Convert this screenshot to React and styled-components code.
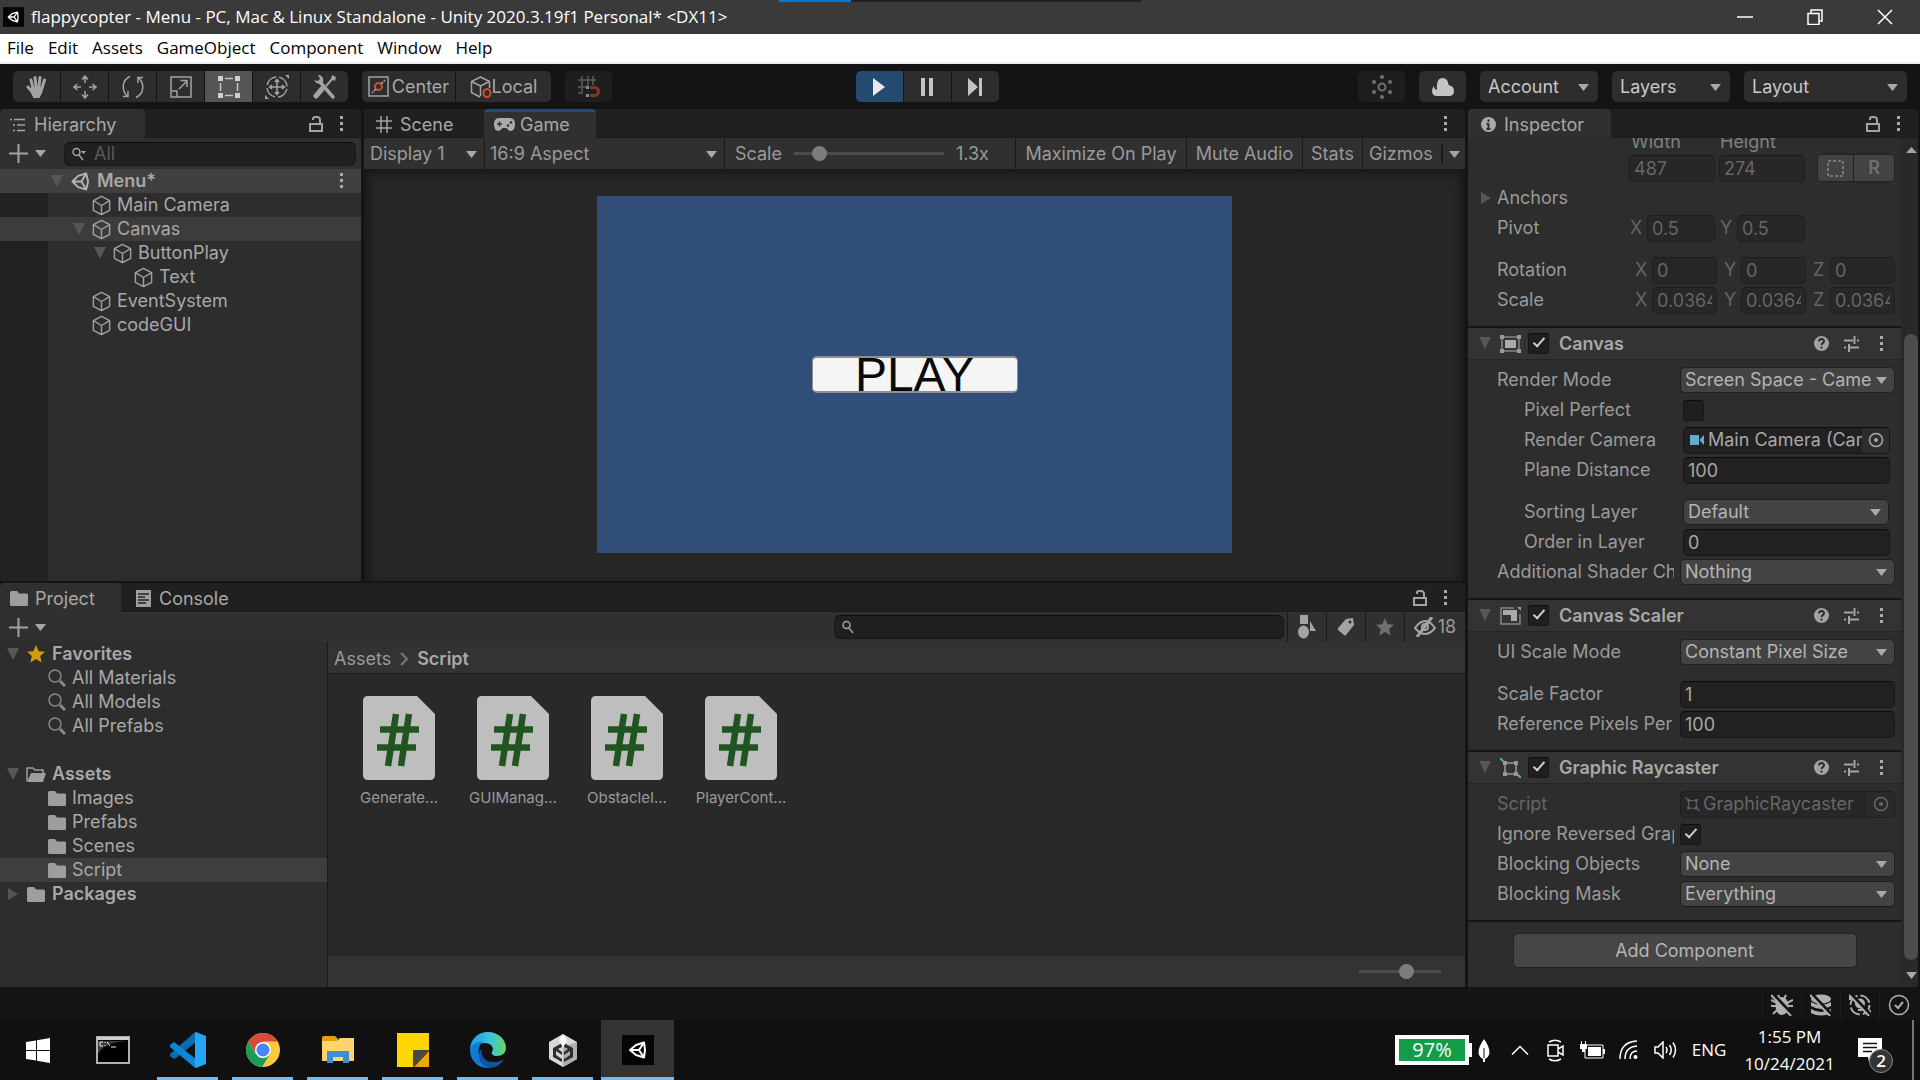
import React, { useId } from "react";
import styled, { createGlobalStyle, css } from "styled-components";

const c = {
  bar: "#141414",
  panel: "#2d2d2d",
  strip: "#303030",
  tabs: "#202020",
  field: "#212121",
  fieldOff: "#272727",
  drop: "#434343",
  text: "#a8a8a8",
  label: "#9a9a9a",
  dim: "#666666",
  line: "#1a1a1a",
  icon: "#a3a3a3",
  fold: "#565656",
  accent: "#244a70",
  orange: "#c8512e",
};

const UI = `Inter, "Open Sans", sans-serif`;
const WIN = `"Open Sans", "Noto Sans", sans-serif`;

const Global = createGlobalStyle`
  *, *::before, *::after { box-sizing: border-box; }
  html, body { margin: 0; background: ${c.bar}; }
  body { font-family: ${UI}; font-size: 18px; line-height: 24px; color: ${c.text}; overflow: hidden; }
  button, input, select { font: inherit; color: inherit; margin: 0; padding: 0; border: 0; background: none; border-radius: 0; outline: 0; }
  a { color: inherit; text-decoration: none; }
  svg { display: block; flex: none; }
  ul { list-style: none; margin: 0; padding: 0; }
`;

/* ---------- shell ---------- */

const Screen = styled.div`
  display: flex;
  flex-direction: column;
  height: 100vh;
`;

const TitleBar = styled.header`
  position: relative;
  display: flex;
  align-items: center;
  height: 34px;
  flex: none;
  padding-left: 3px;
  background: #3a3a3a;
  color: #fff;
  font-family: ${WIN};
`;

const AppTitle = styled.h1`
  flex: 1;
  margin: 0;
  padding-left: 7px;
  font-size: 17px;
  font-weight: 400;
  white-space: nowrap;
`;

const Progress = styled.div`
  position: absolute;
  top: 0;
  left: 779px;
  width: 362px;
  height: 2px;
  background: linear-gradient(90deg, #0078d7 72px, #202020 72px);
`;

const WindowButton = styled.button`
  display: flex;
  align-items: center;
  justify-content: center;
  width: 70px;
  height: 34px;
`;

const MenuBar = styled.nav`
  display: flex;
  align-items: center;
  height: 30px;
  flex: none;
  gap: 14px;
  padding: 0 7px;
  background: #fff;
  border-bottom: 2px solid #eee;
  color: #000;
  font-family: ${WIN};
  font-size: 17px;
`;

const MenuItem = styled.button`
  height: 28px;
`;

const ToolBar = styled.div`
  display: grid;
  grid-template-columns: 1fr auto 1fr;
  align-items: center;
  height: 45px;
  flex: none;
  padding: 0 13px;
  background: ${c.bar};
`;

const ToolSide = styled.div`
  display: flex;
  gap: 14px;
  justify-content: ${(p) => (p.$end ? "flex-end" : "flex-start")};
`;

const Group = styled.div`
  display: flex;
  gap: 1px;
  border-radius: 5px;
  overflow: hidden;
`;

const Transport = styled.div`
  padding-right: 66px;
`;

const ToolButton = styled.button`
  display: flex;
  align-items: center;
  justify-content: center;
  gap: ${(p) => p.$gap || 0}px;
  width: ${(p) => p.$w || 47}px;
  height: 31px;
  background: ${(p) => (p.$on ? p.$on : p.$faint ? "#1e1e1e" : c.panel)};
  color: ${(p) => (p.$faint ? "#6b6b6b" : c.text)};
`;

/* ---------- panels ---------- */

const Workspace = styled.main`
  display: flex;
  flex: 1;
  min-height: 0;
  gap: 3px;
  padding-right: 2px;
`;

const MainColumn = styled.div`
  display: flex;
  flex-direction: column;
  flex: 1;
  min-width: 0;
  gap: 2px;
`;

const TopRow = styled.div`
  display: flex;
  gap: 3px;
  flex: 472 1 0;
  min-height: 0;
`;

const Panel = styled.section`
  display: flex;
  flex-direction: column;
  min-width: 0;
  min-height: 0;
  flex: ${(p) => p.$flex || "1"};
  background: ${c.panel};
  border-radius: 4px 4px 0 0;
  overflow: hidden;
`;

const TabBar = styled.div`
  display: flex;
  align-items: stretch;
  height: 29px;
  flex: none;
  background: ${c.tabs};
  box-shadow: inset 0 -1px ${c.line};
`;

const Tab = styled.button`
  display: flex;
  align-items: center;
  gap: ${(p) => p.$gap || 8}px;
  padding: 2px ${(p) => p.$pad || 10}px 0;
  width: ${(p) => p.$w}px;
  border-radius: 4px 4px 0 0;
  background: ${(p) => (p.$on ? c.strip : "transparent")};
  ${(p) => p.$focus && css`box-shadow: inset 0 3px ${c.accent};`}
`;

const TabTools = styled.div`
  display: flex;
  align-items: center;
  gap: 17px;
  margin-left: auto;
  padding-right: 17px;
`;

const IconButton = styled.button`
  display: flex;
  align-items: center;
  justify-content: center;
`;

const Strip = styled.div`
  display: flex;
  align-items: center;
  height: ${(p) => p.$h || 31}px;
  flex: none;
  padding: 0 ${(p) => p.$r || 0}px 0 ${(p) => p.$l || 0}px;
  background: ${c.strip};
`;

const AddButton = styled(IconButton)`
  flex: none;
  gap: 7px;
`;

const SearchBox = styled.label`
  display: flex;
  align-items: center;
  gap: 8px;
  width: ${(p) => (p.$w ? p.$w + "px" : "auto")};
  flex: ${(p) => (p.$w ? "none" : "1 1 0")};
  min-width: 0;
  margin-left: ${(p) => p.$ml || "auto"};
  height: 24px;
  padding: 0 7px;
  border: 1px solid #181818;
  border-top-color: #0c0c0c;
  border-radius: 6px;
  background: ${c.tabs};
  input { flex: 1; width: 100%; min-width: 0; height: 22px; }
  input::placeholder { color: #5a5a5a; opacity: 1; }
`;

/* ---------- trees ---------- */

const Tree = styled.ul`
  flex: 1;
  background: ${(p) => (p.$gutter ? `linear-gradient(90deg, #222 48px, ${c.panel} 48px)` : c.panel)};
`;

const TreeRow = styled.li`
  display: flex;
  align-items: center;
  gap: ${(p) => p.$gap || 6}px;
  height: 24px;
  padding-left: ${(p) => p.$indent}px;
  font-weight: ${(p) => (p.$bold ? 600 : 400)};
  white-space: nowrap;
  background: ${(p) => (p.$bg ? p.$bg : "transparent")};
`;

const Gap24 = styled.li`
  height: 24px;
`;

const Fold = styled.span`
  display: flex;
  justify-content: center;
  width: 14px;
  flex: none;
`;

const PushRight = styled.span`
  margin-left: auto;
  padding-right: 17px;
`;

/* ---------- game view ---------- */

const Cell = styled.div`
  display: flex;
  align-items: center;
  justify-content: ${(p) => p.$justify || "flex-start"};
  gap: ${(p) => p.$gap || 0}px;
  height: 31px;
  padding: 0 ${(p) => p.$pad || 6}px;
  width: ${(p) => (p.$w ? p.$w + "px" : "auto")};
  flex: ${(p) => (p.$w ? "none" : 1)};
  color: ${c.label};
  white-space: nowrap;
  &:not(:last-child) { border-right: 1px solid ${c.line}; }
`;

const Viewport = styled.div`
  display: flex;
  flex: 1;
  min-height: 0;
  align-items: stretch;
  justify-content: center;
  padding: 27px 0 28px;
  background: #272727;
  box-shadow: inset 0 8px 12px -4px #161616, inset 10px 0 10px -6px #1a1a1a, inset -10px 0 10px -6px #1a1a1a;
`;

const GameCanvas = styled.div`
  display: flex;
  align-items: center;
  justify-content: center;
  aspect-ratio: 16 / 9;
  background: #314e79;
`;

const PlayButton = styled.button`
  width: 206px;
  height: 37px;
  border: solid #8f8f8f;
  border-width: 2px 1px;
  border-radius: 5px;
  background: #f5f5f5;
  color: #0a0a0a;
  font-family: "Liberation Sans", Arial, sans-serif;
  font-size: 48px;
  line-height: 34px;
`;

const Slider = styled.input`
  appearance: none;
  width: ${(p) => p.$w}px;
  height: 16px;
  background: linear-gradient(#4c4c4c, #4c4c4c) center / 100% 3px no-repeat;
  &::-webkit-slider-thumb {
    appearance: none;
    width: 15px;
    height: 15px;
    border-radius: 50%;
    background: #7d7d7d;
  }
`;

/* ---------- project ---------- */

const ProjectBody = styled.div`
  display: flex;
  flex: 1;
  min-height: 0;
`;

const ProjectSide = styled.div`
  display: flex;
  width: 328px;
  flex: none;
  border-right: 1px solid ${c.line};
`;

const ProjectMain = styled.div`
  display: flex;
  flex-direction: column;
  flex: 1;
  min-width: 0;
  background: #292929;
`;

const Crumbs = styled.nav`
  display: flex;
  align-items: center;
  gap: 9px;
  height: 32px;
  flex: none;
  padding: 2px 0 0 6px;
  background: #333;
  border-bottom: 1px solid ${c.line};
  color: ${c.label};
  b { font-weight: 600; color: ${c.text}; }
`;

const Files = styled.ul`
  display: flex;
  flex: 1;
  padding: 22px 14px;
`;

const File = styled.li`
  display: flex;
  flex-direction: column;
  align-items: center;
  gap: 6px;
  width: 114px;
  font-size: 15px;
  color: ${c.label};
`;

const Footer = styled.div`
  display: flex;
  align-items: center;
  justify-content: flex-end;
  height: 31px;
  flex: none;
  padding-right: 24px;
  background: #333;
`;

/* ---------- inspector ---------- */

const InspectorBody = styled.div`
  display: flex;
  flex: 1;
  min-height: 0;
  overflow: hidden;
`;

const InspectorContent = styled.div`
  flex: 1;
  min-width: 0;
`;

const Fields = styled.div`
  display: flex;
  flex-direction: column;
  padding: ${(p) => (p.$top ? "0 6px 11px 0" : "5px 6px 11px 0")};
`;

const Row = styled.div`
  display: flex;
  align-items: center;
  height: 30px;
  padding-left: ${(p) => (p.$indent ? 56 : 29)}px;
  margin-top: ${(p) => (p.$apart ? 12 : 0)}px;
  color: ${(p) => (p.$off ? c.dim : c.label)};
`;

const Label = styled.label`
  width: ${(p) => (p.$indent ? 150 : 177)}px;
  flex: none;
  margin-right: ${(p) => (p.$indent ? 9 : 6)}px;
  overflow: hidden;
  white-space: nowrap;
`;

const Well = styled.div`
  display: flex;
  align-items: center;
  flex: ${(p) => (p.$w ? "none" : 1)};
  width: ${(p) => (p.$w ? p.$w + "px" : "auto")};
  min-width: 0;
  height: 27px;
  margin-right: ${(p) => p.$r || 0}px;
  padding-left: 4px;
  border: 1px solid ${(p) => (p.$off ? "#1f1f1f" : "#181818")};
  border-top-color: ${(p) => (p.$off ? "#1c1c1c" : "#0d0d0d")};
  border-radius: 5px;
  background: ${(p) => (p.$off ? c.fieldOff : c.field)};
  color: ${(p) => (p.$off ? c.dim : c.text)};
  overflow: hidden;
  white-space: nowrap;
  input { width: 100%; min-width: 0; height: 25px; margin-right: ${(p) => (p.$off ? 4 : 0)}px; }
`;

const ObjectText = styled.span`
  flex: 1;
  min-width: 0;
  padding-left: 3px;
  overflow: hidden;
`;

const Picker = styled(IconButton)`
  width: 27px;
  height: 25px;
  background: ${(p) => (p.$off ? "#2a2a2a" : c.panel)};
`;

const SelectBox = styled.span`
  position: relative;
  display: flex;
  flex: ${(p) => (p.$w ? "none" : 1)};
  width: ${(p) => (p.$w ? p.$w + "px" : "auto")};
  min-width: 0;
  margin-right: ${(p) => p.$r || 0}px;
  select {
    appearance: none;
    width: 100%;
    height: ${(p) => p.$h || 26}px;
    padding: 0 ${(p) => p.$pr || 22}px 0 ${(p) => p.$pl || 4}px;
    border: ${(p) => (p.$flat ? "0" : "1px solid #1e1e1e")};
    border-radius: 5px;
    background: ${(p) => p.$bg || c.drop};
    color: ${(p) => p.$fg || "#b4b4b4"};
    text-overflow: clip;
  }
  svg { position: absolute; right: ${(p) => p.$ar || 8}px; top: 50%; margin-top: -3px; pointer-events: none; }
`;

const Check = styled.input`
  appearance: none;
  display: flex;
  justify-content: center;
  width: 21px;
  height: 21px;
  flex: none;
  border: 1px solid #181818;
  border-top-color: #0d0d0d;
  border-radius: 3px;
  background: #1f1f1f;
  &:checked::after {
    content: "";
    width: 6px;
    height: 12px;
    margin-top: 1px;
    border: solid #d0d0d0;
    border-width: 0 2px 2px 0;
    transform: rotate(42deg);
  }
`;

const Component = styled.section`
  border-top: 2px solid #151515;
`;

const ComponentHead = styled.div`
  display: flex;
  align-items: center;
  height: 32px;
  padding: 0 12px 0 10px;
  background: #333;
  border-bottom: 1px solid #252525;
`;

const ComponentName = styled.label`
  flex: 1;
  padding-left: 10px;
  font-weight: 600;
`;

const HeadIcons = styled.span`
  display: flex;
  align-items: center;
  gap: 15px;
  button { width: 15px; }
`;

const Caption = styled.span`
  width: ${(p) => p.$w}px;
  line-height: 22px;
  flex: none;
`;

const CaptionRow = styled.div`
  display: flex;
  align-items: flex-end;
  height: 15px;
  padding-left: 163px;
  overflow: hidden;
  color: #808080;
`;

const Axis = styled.label`
  width: ${(p) => p.$w}px;
  flex: none;
  color: ${c.dim};
`;

const ModeGroup = styled(Group)`
  margin-left: 12px;
  border: 1px solid #222;
  background: #222;
`;

const ModeButton = styled.button`
  display: flex;
  align-items: center;
  justify-content: center;
  width: ${(p) => p.$w}px;
  height: 26px;
  background: ${c.drop};
  color: #6e6e6e;
  font-weight: 600;
`;

const AnchorButton = styled.button`
  display: flex;
  align-items: center;
  gap: 5px;
  margin-left: -17px;
`;

const AddComponent = styled.div`
  display: flex;
  justify-content: center;
  padding: 11px 0;
  border-top: 2px solid #151515;
  button {
    width: 344px;
    height: 35px;
    border: 1px solid #222;
    border-radius: 5px;
    background: #464646;
    color: #b4b4b4;
  }
`;

const ScrollTrack = styled.div`
  display: flex;
  flex-direction: column;
  align-items: center;
  width: 17px;
  flex: none;
  padding: 9px 0 8px 3px;
  background: #292929;
`;

const ScrollThumb = styled.div`
  width: 14px;
  flex: 1;
  margin: 181px 0 12px;
  border-radius: 7px;
  background: #4d4d4d;
`;

/* ---------- bottom ---------- */

const StatusBar = styled.footer`
  display: flex;
  justify-content: flex-end;
  align-items: center;
  height: 33px;
  flex: none;
  padding: 2px 2px 0 0;
  background: ${c.bar};
`;

const StatusButton = styled(IconButton)`
  width: 39px;
  height: 30px;
  border-left: 1px solid #1f1f1f;
`;

const TaskBar = styled.nav`
  display: flex;
  height: 60px;
  flex: none;
  background: #101010;
  font-family: ${WIN};
  color: #fff;
`;

const Task = styled.button`
  display: flex;
  align-items: center;
  justify-content: center;
  width: 75px;
  height: 60px;
`;

const TaskFace = styled.span`
  display: flex;
  align-items: center;
  justify-content: center;
  width: ${(p) => (p.$active ? 73 : 61)}px;
  height: 60px;
  background: ${(p) => (p.$active ? "#333" : "transparent")};
  ${(p) => p.$open && css`box-shadow: inset 0 -3px #76b9ed;`}
`;

const Tray = styled.div`
  display: flex;
  align-items: center;
  margin-left: auto;
  padding-right: 7px;
  border-right: 2px solid #777;
  margin-right: 6px;
  font-size: 17px;
`;

const Battery = styled.div`
  display: flex;
  align-items: center;
  justify-content: center;
  width: 74px;
  height: 30px;
  border: 4px solid #fff;
  background: #149c48;
  font-size: 20px;
`;

const BatteryNub = styled.div`
  width: 3px;
  height: 14px;
  background: #fff;
`;

const TrayItem = styled.div`
  display: flex;
  align-items: center;
  justify-content: center;
  flex: none;
  width: ${(p) => p.$w}px;
`;

const Clock = styled.time`
  display: flex;
  flex-direction: column;
  align-items: center;
  gap: 3px;
  width: 121px;
`;

const Notice = styled.button`
  position: relative;
  width: 55px;
  height: 60px;
  padding-left: 8px;
`;

const Badge = styled.span`
  position: absolute;
  right: 12px;
  bottom: 7px;
  width: 24px;
  height: 24px;
  border: 1px solid #888;
  border-radius: 50%;
  background: #333;
  font-size: 17px;
  font-weight: 600;
  line-height: 22px;
`;

/* ---------- drawings ---------- */

const S = ({ w, h, vb, children, ...rest }) => (
  <svg width={w} height={h} viewBox={vb || `0 0 ${w} ${h}`} fill="none" aria-hidden="true" {...rest}>
    {children}
  </svg>
);

const Caret = ({ color = "#a8a8a8" }) => (
  <S w={11} h={7}><path d="M0 0h11L5.500 7z" fill={color} /></S>
);
const FoldDown = () => (
  <S w={14} h={13}><path d="M1 0h12L7 12z" fill={c.fold} /></S>
);
const FoldRight = () => (
  <S w={12} h={14}><path d="M1 1v12l10-6z" fill={c.fold} /></S>
);
const Dots = () => (
  <S w={4} h={16}><path d="M0 0h3v3H0zM0 6h3v3H0zM0 12h3v3H0z" fill="#aaa" /></S>
);
const Lock = () => (
  <S w={14} h={16} stroke={c.icon} strokeWidth="2"><path d="M1 8h12v7H1zM4 4V3q0-2 2-2h2q3 0 3 3v4" /></S>
);
const Plus = () => (
  <S w={19} h={19} stroke={c.icon} strokeWidth="2"><path d="M9.500 0v19M0 9.500h19" /></S>
);
const Cube = ({ s = 22 }) => (
  <S w={s} h={s} vb="0 0 22 22" stroke="#a0a0a0" strokeWidth="1.500" strokeLinejoin="round">
    <path d="M11 1.500l8.500 4.500v10L11 20.500 2.500 16V6zM2.500 6l8.500 5 8.500-5M11 11v9.500" />
  </S>
);
const UnityMark = ({ s = 19, color = "#b4b4b4" }) => (
  <S w={s} h={s} vb="0 0 20 20" stroke={color} strokeWidth="2" strokeLinejoin="round">
    <path d="M16 1.500L7.500 4 1.500 10l6 6 8.500 2.500 2-8.500zM1.500 10H11M11 10l5-8.500M11 10l5 8.500" />
  </S>
);
const Magnifier = ({ caret }) => (
  <S w={caret ? 14 : 12} h={14} stroke={c.icon} strokeWidth="1.500">
    <circle cx="4.500" cy="5" r="3.500" /><path d="M7 8l4 5" />
    {caret && <path d="M9 4h5l-2.500 3z" fill={c.icon} stroke="none" />}
  </S>
);
const BigMagnifier = () => (
  <S w={18} h={18} stroke="#8a8a8a"><circle cx="7" cy="7" r="6" strokeWidth="1.500" /><path d="M12 12l5 5" strokeWidth="3" /></S>
);
const Folder = () => (
  <S w={18} h={15}><path d="M0 1.500Q0 0 1.500 0H7l2 2.500h7.500q1.500 0 1.500 1.500v9.500q0 1.500-1.500 1.500h-15Q0 15 0 13.500z" fill="#9e9e9e" /></S>
);
const FolderOpen = () => (
  <S w={20} h={15}><path d="M1 14V1h6l2 2h8v3" stroke="#9e9e9e" strokeWidth="1.500" /><path d="M5 6h15l-3 9H1z" fill="#9e9e9e" /></S>
);
const Star = ({ color, s = 18 }) => (
  <S w={s} h={s} vb="0 0 18 18"><path d="M9 0l2.600 6.200 6.400.5-4.900 4.300 1.600 6.500L9 14l-5.700 3.500L4.900 11 0 6.700l6.400-.5z" fill={color} /></S>
);
const Target = ({ color = "#a8a8a8" }) => (
  <S w={16} h={16}><circle cx="8" cy="8" r="6.500" stroke={color} strokeWidth="1.500" /><circle cx="8" cy="8" r="2" fill={color} /></S>
);
const Help = () => (
  <S w={15} h={15}><circle cx="7.500" cy="7.500" r="7.500" fill={c.icon} /><path d="M5 5.500q0-2.500 2.500-2.500T10 5.500c0 1.500-2.500 1.700-2.500 3.500M7.500 10.500v2" stroke="#2d2d2d" strokeWidth="2" /></S>
);
const Preset = () => (
  <S w={15} h={16} stroke={c.icon} strokeWidth="2"><path d="M0 4.500h9M13 4.500h2M0 11.500h2M6 11.500h9M10.500 0v8M5 8v8" /></S>
);
const ScriptFile = () => (
  <S w={72} h={84}>
    <path d="M5 0h49l18 18v61q0 5-5 5H5q-5 0-5-5V5q0-5 5-5z" fill="#bebebe" />
    <path d="M17 33.500h39M14 51.500h39M33 18l-8 52M46 18l-8 52" stroke="#205522" strokeWidth="6.500" />
  </S>
);
const HandTool = () => (
  <S w={22} h={24} stroke={c.icon} strokeLinecap="round">
    <path d="M7 13L5 5M10 11L9 2.500M13 11l1-8.500M16 13l2.500-8M5.500 16L2 12" strokeWidth="3" />
    <path d="M5.500 12h12l-1 5-3 6h-6L4 16z" fill={c.icon} stroke="none" />
  </S>
);
const MoveTool = () => (
  <S w={24} h={24} stroke={c.icon} strokeWidth="1.500">
    <path d="M12 2v6M12 16v6M2 12h6M16 12h6M9 4.500L12 1l3 3.500M9 19.500l3 3.500 3-3.500M4.500 9L1 12l3.500 3M19.500 9l3.500 3-3.500 3" />
  </S>
);
const RotateTool = () => (
  <S w={24} h={24} stroke={c.icon} strokeWidth="1.500">
    <path d="M9 1.500C1 5 0 15 6.500 21.500M2 21.500h5V16M15 22.500c8-3.500 9-13.500 2.500-20M22 2.500h-5V8" />
  </S>
);
const ScaleTool = () => (
  <S w={22} h={22} stroke={c.icon} strokeWidth="1.500"><path d="M1 1h20v20H1zM1 15h6v6M9 13l8-8M10.500 4.500H17V11" /></S>
);
const RectTool = () => (
  <S w={22} h={22}>
    <path d="M7 2.500h8M7 19.500h8M2.500 7v8M19.500 7v8" stroke="#c4c4c4" strokeWidth="1.500" />
    <path d="M0 0h5v5H0zM17 0h5v5h-5zM0 17h5v5H0zM17 17h5v5h-5z" fill="#d0d0d0" />
  </S>
);
const TransformTool = () => (
  <S w={24} h={24} stroke={c.icon} strokeWidth="1.500">
    <circle cx="12" cy="12" r="10" strokeDasharray="12.500 3.200" strokeDashoffset="-2" />
    <path d="M12 5v14M5 12h14M10 7l2-2.500L14 7M10 17l2 2.500 2-2.500M7 10l-2.500 2L7 14M17 10l2.500 2-2.500 2" />
    <path d="M20 0h4v4zM0 20v4h4z" fill={c.icon} stroke="none" />
  </S>
);
const CustomTool = () => (
  <S w={24} h={26} stroke={c.icon}>
    <path d="M7 8l13 15" strokeWidth="3.500" strokeLinecap="round" />
    <path d="M5 1c4 0 6 3 5 7-3 3-7 2-9-2l4 1 2-2z" fill={c.icon} stroke="none" />
    <path d="M21 3l-8 9" strokeWidth="2" /><path d="M9 15l-6 7" strokeWidth="5" strokeLinecap="round" /><path d="M19 1l4 2-1 4-4-2z" fill={c.icon} stroke="none" />
  </S>
);
const PivotIcon = () => (
  <S w={21} h={21}><path d="M1 1h19v19H1z" stroke={c.icon} strokeWidth="1.500" /><circle cx="10.500" cy="10.500" r="3.500" stroke={c.orange} strokeWidth="2" /><path d="M13 8l4-4M8 13l-4 4" stroke={c.icon} strokeWidth="1.500" strokeDasharray="3 1" /></S>
);
const LocalIcon = () => (
  <S w={22} h={22} strokeLinejoin="round"><path d="M10 21L1.500 16.500v-11L10.500 1l9 4.500V12M1.500 5.500l9 4.500 9-4.500M10.500 10v10" stroke={c.icon} strokeWidth="1.500" /><ellipse cx="17" cy="17" rx="3.500" ry="4" stroke={c.orange} strokeWidth="2" /></S>
);
const SnapIcon = () => (
  <S w={22} h={22}><path d="M0 4h18M0 11h8M0 17h4M4 0v18M10 0v10M15 0v9" stroke="#5c5c5c" strokeWidth="1.500" /><path d="M12 11.500h4.500a4 4 0 010 8H12" stroke="#7b3b28" strokeWidth="3" /><path d="M8 10h3v3H8zM8 18h3v3H8z" fill="#8a8a8a" /></S>
);
const HierarchyIcon = () => (
  <S w={16} h={14} stroke={c.icon} strokeWidth="1.500"><path d="M4 1.500h11M7 7h8M7 12.500h8M0 1.500h2M3 7h2M3 12.500h2" /></S>
);
const HashIcon = () => (
  <S w={16} h={17} stroke={c.icon} strokeWidth="1.500"><path d="M0 5h16M0 12h16M5 0v17M11 0v17" /></S>
);
const GamepadIcon = () => (
  <S w={21} h={13}><path d="M5 0h11q5 0 5 6.500T16.500 13q-2 0-4-3h-4q-2 3-4 3Q0 13 0 6.500T5 0z" fill="#aaa" /><path d="M3 6h5M5.500 3.500v5" stroke="#303030" strokeWidth="1.500" /><circle cx="14" cy="7.500" r="1.300" fill="#303030" /><circle cx="17" cy="4.500" r="1.300" fill="#303030" /></S>
);
const ConsoleIcon = () => (
  <S w={15} h={17}><path d="M0 0h15v17H0z" fill="#a0a0a0" /><path d="M2 4h11M2 7h7M2 10h11M2 13h8" stroke="#222" strokeWidth="1.500" /></S>
);
const InfoIcon = () => (
  <S w={15} h={15}><circle cx="7.500" cy="7.500" r="7.500" fill="#aaa" /><path d="M7.500 2.500v2.500M7.500 6.500v6M5.500 7H8M5.500 12h4" stroke="#303030" strokeWidth="2" /></S>
);
const SunIcon = () => (
  <S w={20} h={24}><circle cx="10" cy="12" r="3.500" stroke="#707070" strokeWidth="2" />{[[10, 2], [10, 22], [2, 7], [18, 7], [2, 17], [18, 17]].map(([x, y]) => <circle key={x + "-" + y} cx={x} cy={y} r="2" fill="#707070" />)}</S>
);
const CloudIcon = () => (
  <S w={22} h={18}><path d="M5 18q-5 0-5-5 0-3 2-5 0 3 3 4Q4 0 10.500 0q5.500 0 6 7 5.500 1 5.500 6 0 5-5 5z" fill="#c4c4c4" /></S>
);
const CanvasIcon = () => (
  <S w={21} h={18}><path d="M2 2h17v14H2z" stroke="#888" strokeWidth="1.500" /><path d="M5 5h11v8H5z" fill="#aaa" /><path d="M0 0h4v4H0zM17 0h4v4h-4zM0 14h4v4H0zM17 14h4v4h-4z" fill="#999" /></S>
);
const ScalerIcon = () => (
  <S w={21} h={18}><path d="M14 1H1v16h19V7" stroke="#888" strokeWidth="1.500" /><path d="M3 3h14v11h-6V8H3z" fill="#aaa" /><path d="M17 0h4v4z" fill="#999" /></S>
);
const RayIcon = ({ w = 21, h = 20, o = 1 }) => (
  <S w={w} h={h} vb="0 0 21 20" opacity={o}><path d="M5 5h11v11H5z" stroke="#999" strokeWidth="1.500" /><path d="M3 3h4v4H3zM14 3h4v4h-4zM3 14h4v4H3zM14 14h4v4h-4z" fill="#999" /><path d="M0 0l4 4M17 16l4 4" stroke="#5ba7cc" strokeWidth="2" /></S>
);
const CameraIcon = () => (
  <S w={17} h={10}><path d="M2 0h9v10H2zM12 4l4-4v10l-4-4z" fill="#62abcd" /></S>
);
const ShapesIcon = () => (
  <S w={18} h={24}><path d="M2 0h8v9H2zM12 6l6 10h-6z" fill={c.icon} /><ellipse cx="5.500" cy="17" rx="5.500" ry="6.500" fill={c.icon} /></S>
);
const TagIcon = () => (
  <S w={16} h={18}><path d="M8 1l7-1 1 7-8 10q-1 1-2 0l-6-5q-1-1 0-2z" fill={c.icon} /><circle cx="12" cy="4" r="1.500" fill="#303030" /></S>
);
const HiddenIcon = () => (
  <S w={22} h={20} stroke={c.icon} strokeWidth="2"><path d="M1 11q10-14 20 0-10 12-20 0z" /><path d="M3 20L18 0" strokeWidth="3" /><circle cx="11" cy="10" r="3" /></S>
);
const DashedRect = () => (
  <S w={17} h={17}><path d="M1 1h15v15H1z" stroke="#777" strokeWidth="2" strokeDasharray="3 2" /></S>
);
const BugOff = () => (
  <S w={22} h={22} stroke="#b0b0b0" strokeWidth="2"><ellipse cx="11" cy="12" rx="5.500" ry="8" fill="#b0b0b0" /><path d="M7 1l2 4M15 1l-2 4M0 6l6 3M22 6l-6 3M0 12h22M2 20l4-4M20 20l-4-4" /><path d="M2 0l20 21" stroke={c.bar} strokeWidth="3" /><path d="M0 1l20 21" /></S>
);
const CacheOff = () => (
  <S w={22} h={22}><ellipse cx="11" cy="5" rx="10" ry="4.500" fill="#b0b0b0" /><path d="M1 8q10 6 20 0v4q-10 6-20 0zM1 15q10 6 20 0v4q-10 5-20 0z" fill="#b0b0b0" /><path d="M2 0l20 21" stroke={c.bar} strokeWidth="3" /><path d="M0 1l20 21" stroke="#b0b0b0" strokeWidth="2" /></S>
);
const LightOff = () => (
  <S w={22} h={22} stroke="#b0b0b0" strokeWidth="2"><circle cx="11" cy="11" r="9.500" strokeDasharray="12 3" /><circle cx="11" cy="9.500" r="4" fill="#b0b0b0" /><path d="M9 16h4M1 1v5M21 16v5" /><path d="M2 0l20 21" stroke={c.bar} strokeWidth="3" /><path d="M0 1l20 21" /></S>
);
const Okay = () => (
  <S w={22} h={22} stroke="#b0b0b0"><circle cx="11" cy="11" r="9.500" strokeWidth="1.500" /><path d="M7 11l3 3 5-6" strokeWidth="2" /></S>
);

const UnityTile = ({ w, h, s }) => (
  <S w={w} h={h} vb="0 0 32 30">
    <path d="M0 0h32v30H0z" fill="#050505" />
    <path d="M22 7.500L14 10l-6 5 6 5 8 2.500 1-7.500zM8 15h9M17 15l5-7.500M17 15l5 7.500" stroke="#fff" strokeWidth={s || 2} strokeLinejoin="round" />
  </S>
);

const WindowsLogo = () => (
  <S w={24} h={25}><path d="M0 4l10-1.500V12H0zM11 2.300L24 0v12H11zM0 13h10v9.500L0 21zM11 13h13v12l-13-2.300z" fill="#fff" /></S>
);
const Terminal = () => (
  <S w={34} h={28}><path d="M1 1h32v26H1z" fill="#000" stroke="#aab2b8" strokeWidth="2" /><path d="M1 1h32v3H1z" fill="#c9d0d4" /><path d="M2 5h30Q8 6 2 18z" fill="#3c3c3c" /><path d="M7 6H4v4h3M9 6v1M9 9v1M11 6l3 4M15 11h5" stroke="#eee" /></S>
);
const VsCode = () => (
  <S w={36} h={36}><path d="M26 0v10L6 26l-2 1-4-3v-2L24 1z" fill="#0a6cb0" /><path d="M0 13l4-3 22 17v9l-2-1L0 15z" fill="#0d86d6" /><path d="M26 0l10 4v28l-10 4-1-1V1z" fill="#25a5f2" /></S>
);
const Chrome = () => (
  <S w={34} h={34} vb="0 0 34 34">
    <circle cx="17" cy="17" r="17" fill="#fcc93c" />
    <path d="M2.300 8.500A17 17 0 0131.700 8.500H17L9.500 20z" fill="#d94a3e" />
    <path d="M2.300 8.500A17 17 0 0016 34l8-13-14.500-.5z" fill="#1c9c58" />
    <circle cx="17" cy="17" r="8" fill="#fff" /><circle cx="17" cy="17" r="6.500" fill="#4886f3" />
  </S>
);
const Explorer = () => (
  <S w={32} h={28}><path d="M0 2q0-2 2-2h11l3 3v3H0z" fill="#e0a008" /><path d="M0 5h15l3-3h14v23H0z" fill="#fbd56c" /><path d="M5 15h22v12h-6v-6H11v6H5z" fill="#3c8fd6" /></S>
);
const Sticky = () => (
  <S w={32} h={34}><path d="M0 0h32v17L16 34H0z" fill="#ffd600" /><path d="M16 17h16L16 34z" fill="#474747" /><path d="M32 18v16H17z" fill="#e9a90c" /></S>
);
const Edge = () => (
  <S w={36} h={36}>
    <defs><linearGradient id="edgeTop" x1="0" x2="1"><stop offset="0" stopColor="#2197e0" /><stop offset=".55" stopColor="#38c4dd" /><stop offset="1" stopColor="#65d85a" /></linearGradient></defs>
    <path d="M0 18C0 7 8 0 18 0c11 0 18 8 18 16 0 5-4 8-9 8-4 0-6-2-5-4 3-5-2-9-7-9-8 0-13 4-15 9z" fill="url(#edgeTop)" />
    <path d="M0 18c2-6 8-9 13-8-4 3-5 7-4 12 1 7 6 11 10 14C8 37 0 28 0 18z" fill="#0f7bd4" />
    <path d="M12 17c-2 7 4 14 12 13 5 0 8-2 10-3-3 6-9 9-15 9-6-2-10-7-10-12 0-3 1-6 3-7z" fill="#1253a3" />
  </S>
);
const UnityHub = () => (
  <S w={28} h={33}>
    <path d="M14 0l14 8v17l-14 8L0 25V8z" fill="#d8d8d8" /><path d="M14 13l14-5v17l-14 8z" fill="#aeaeae" />
    <path d="M13 9L4 14v9l9 5v-3l-6-4v-4l6 4v-3l-4-3 4-2zM15 9l9 5v9l-9 5v-3l6-4v-4l-6 4v-3l4-3-4-2z" fill="#2e2e2e" />
    <path d="M14 0l4 6-4 8-4-8z" fill="#f8f8f8" />
  </S>
);

const Leaf = () => (
  <S w={12} h={23}><path d="M6 0c6 8 8 17 1 20v3H5v-3C-2 17 0 8 6 0z" fill="#fff" /><path d="M6 9v10" stroke="#101010" /></S>
);
const Chevron = () => (<S w={18} h={10} stroke="#fff" strokeWidth="1.500"><path d="M1 9.500l8-8 8 8" /></S>);
const MeetIcon = () => (<S w={18} h={23} stroke="#fff" strokeWidth="1.500"><path d="M1 6h10v11H1zM11 10l5-3v9l-5-3M2 3q6-3.500 12 0M2 20q6 3.500 12 0" /></S>);
const PlugIcon = () => (<S w={25} h={18}><path d="M5 4h18v13H5z" stroke="#fff" /><path d="M8 6h13v9H8zM23 8h2v5h-2z" fill="#fff" /><path d="M0 3h7v5H5v3H2V8H0zM1 0h1v3H1zM5 0h1v3H5z" fill="#fff" /></S>);
const WifiIcon = () => (<S w={20} h={20} stroke="#fff" strokeWidth="1.500"><path d="M1 19Q1 2 18 1M6 19Q6 7 18 6M11 19q0-8 7-8" /><circle cx="16.500" cy="17" r="2" fill="#fff" stroke="none" /></S>);
const SpeakerIcon = () => (<S w={23} h={18} stroke="#fff" strokeWidth="1.500"><path d="M1 6h3l5-5v16l-5-5H1zM12 6q2 3 0 6M15.500 4q3.500 5 0 10M19 1.500q5 7.500 0 15" /></S>);
const NoteIcon = () => (<S w={24} h={24}><path d="M0 0h24v19h-8l-5 5-1-5H0z" fill="#fff" /><path d="M5 5.500h14M5 9.500h14M5 13.500h9" stroke="#101010" strokeWidth="1.500" /></S>);

/* ---------- pieces ---------- */

const Dropdown = ({ id, value, label, ...p }) => (
  <SelectBox {...p}>
    <select id={id} aria-label={label} defaultValue={value}><option>{value}</option></select>
    <Caret />
  </SelectBox>
);

const TopDropdown = ({ name, w }) => (
  <Dropdown label={name} value={name} $w={w} $h={31} $flat $bg={c.panel} $fg="#c8c8c8" $pl={8} $ar={9} />
);

const DropRow = ({ label, value, indent, apart }) => {
  const id = useId();
  return (
    <Row $indent={indent} $apart={apart}>
      <Label htmlFor={id} $indent={indent}>{label}</Label>
      <Dropdown id={id} value={value} $r={indent ? 6 : 0} />
    </Row>
  );
};

const TextRow = ({ label, value, indent, apart }) => {
  const id = useId();
  return (
    <Row $indent={indent} $apart={apart}>
      <Label htmlFor={id} $indent={indent}>{label}</Label>
      <Well $r={indent ? 5 : 0}><input id={id} defaultValue={value} /></Well>
    </Row>
  );
};

const CheckRow = ({ label, checked, indent }) => {
  const id = useId();
  return (
    <Row $indent={indent}>
      <Label htmlFor={id} $indent={indent}>{label}</Label>
      <Check id={id} type="checkbox" defaultChecked={checked} />
    </Row>
  );
};

const ObjectRow = ({ label, value, icon, indent, off }) => (
  <Row $indent={indent} $off={off}>
    <Label as="span" $indent={indent}>{label}</Label>
    <Well $off={off} $r={indent ? 5 : 0}>
      {icon}
      <ObjectText>{value}</ObjectText>
      <Picker $off={off} aria-label={`Pick ${label}`}><Target color={off ? "#666" : undefined} /></Picker>
    </Well>
  </Row>
);

const VectorRow = ({ label, values, start, axis, width, gap, apart }) => {
  const id = useId();
  return (
    <Row $apart={apart}>
      <Caption $w={start}>{label}</Caption>
      {values.map((v, i) => (
        <React.Fragment key={i}>
          <Axis htmlFor={id + i} $w={axis}>{"XYZ"[i]}</Axis>
          <Well $off $w={width} $r={i === values.length - 1 ? 0 : gap}><input id={id + i} defaultValue={v} disabled /></Well>
        </React.Fragment>
      ))}
    </Row>
  );
};

const Inspected = ({ name, icon, children }) => {
  const id = useId();
  return (
    <Component>
      <ComponentHead>
        <Fold><FoldDown /></Fold>
        <TrayItem $w={36}>{icon}</TrayItem>
        <Check id={id} type="checkbox" defaultChecked />
        <ComponentName htmlFor={id}>{name}</ComponentName>
        <HeadIcons>
          <IconButton aria-label="Help"><Help /></IconButton>
          <IconButton aria-label="Presets"><Preset /></IconButton>
          <IconButton aria-label="More"><Dots /></IconButton>
        </HeadIcons>
      </ComponentHead>
      <Fields>{children}</Fields>
    </Component>
  );
};

const tools = [
  ["Hand", HandTool], ["Move", MoveTool], ["Rotate", RotateTool], ["Scale", ScaleTool],
  ["Rect", RectTool], ["Transform", TransformTool], ["Custom", CustomTool],
];

const scene = [
  ["Main Camera", 91, false], ["Canvas", 72, true], ["ButtonPlay", 93, true],
  ["Text", 133, false], ["EventSystem", 91, false], ["codeGUI", 91, false],
];

const files = ["Generate...", "GUIManag...", "ObstacleI...", "PlayerCont..."];

const tasks = [
  ["Start", WindowsLogo, false], ["Command Prompt", Terminal, false], ["Visual Studio Code", VsCode, true],
  ["Chrome", Chrome, true], ["File Explorer", Explorer, true], ["Sticky Notes", Sticky, true],
  ["Edge", Edge, true], ["Unity Hub", UnityHub, true],
];

export default function App() {
  return (
    <Screen>
      <Global />
      <TitleBar>
        <UnityTile w={21} h={20} s={2} />
        <AppTitle>flappycopter - Menu - PC, Mac &amp; Linux Standalone - Unity 2020.3.19f1 Personal* &lt;DX11&gt;</AppTitle>
        <Progress />
        <WindowButton aria-label="Minimize"><S w={16} h={16} stroke="#fff" strokeWidth="1.500"><path d="M0 8h16" /></S></WindowButton>
        <WindowButton aria-label="Restore"><S w={16} h={16} stroke="#fff" strokeWidth="1.500"><path d="M1 4.500h11v11H1zM4 4V1h11v11h-3" /></S></WindowButton>
        <WindowButton aria-label="Close"><S w={16} h={16} stroke="#fff" strokeWidth="1.500"><path d="M1 1l14 14M15 1L1 15" /></S></WindowButton>
      </TitleBar>

      <MenuBar>
        {["File", "Edit", "Assets", "GameObject", "Component", "Window", "Help"].map((m) => <MenuItem key={m}>{m}</MenuItem>)}
      </MenuBar>

      <ToolBar>
        <ToolSide>
          <Group>
            {tools.map(([n, I]) => <ToolButton key={n} aria-label={n} $on={n === "Rect" && "#555"}><I /></ToolButton>)}
          </Group>
          <Group>
            <ToolButton $w={93} $gap={3}><PivotIcon />Center</ToolButton>
            <ToolButton $w={95}><LocalIcon />Local</ToolButton>
          </Group>
          <Group><ToolButton $faint aria-label="Snap"><SnapIcon /></ToolButton></Group>
        </ToolSide>
        <Transport>
          <Group>
            <ToolButton aria-label="Play" $on={c.accent}><S w={14} h={18}><path d="M1 0v18l12-9z" fill="#e8e8e8" /></S></ToolButton>
            <ToolButton aria-label="Pause"><S w={14} h={18}><path d="M1 0h4v18H1zM9 0h4v18H9z" fill="#c4c4c4" /></S></ToolButton>
            <ToolButton aria-label="Step"><S w={16} h={18}><path d="M1 0v18l10-9zM12 0h3v18h-3z" fill="#c4c4c4" /></S></ToolButton>
          </Group>
        </Transport>
        <ToolSide $end>
          <Group><ToolButton $faint aria-label="Lighting"><SunIcon /></ToolButton></Group>
          <Group><ToolButton aria-label="Cloud"><CloudIcon /></ToolButton></Group>
          <TopDropdown name="Account" w={118} />
          <TopDropdown name="Layers" w={118} />
          <TopDropdown name="Layout" w={163} />
        </ToolSide>
      </ToolBar>

      <Workspace>
        <MainColumn>
          <TopRow>
            <Panel $flex="0 0 361px">
              <TabBar>
                <Tab $on $w={145}><HierarchyIcon />Hierarchy</Tab>
                <TabTools>
                  <IconButton aria-label="Lock"><Lock /></IconButton>
                  <IconButton aria-label="More"><Dots /></IconButton>
                </TabTools>
              </TabBar>
              <Strip $l={9} $r={5}>
                <AddButton aria-label="Create"><Plus /><Caret /></AddButton>
                <SearchBox $ml="18px"><Magnifier caret /><input placeholder="All" aria-label="Search hierarchy" /></SearchBox>
              </Strip>
              <Tree $gutter>
                <TreeRow $indent={50} $gap={7} $bold $bg="#404040">
                  <Fold><FoldDown /></Fold><UnityMark />Menu*<PushRight><Dots /></PushRight>
                </TreeRow>
                {scene.map(([n, indent, fold]) => (
                  <TreeRow key={n} $indent={indent} $gap={5} $bg={n === "Canvas" && "#3c3c3c"}>
                    {fold && <Fold><FoldDown /></Fold>}
                    <Cube s={21} />
                    {n}
                  </TreeRow>
                ))}
              </Tree>
            </Panel>

            <Panel>
              <TabBar>
                <Tab $w={120} $pad={12}><HashIcon />Scene</Tab>
                <Tab $w={112} $on $focus $gap={5}><GamepadIcon />Game</Tab>
                <TabTools><IconButton aria-label="More"><Dots /></IconButton></TabTools>
              </TabBar>
              <Strip>
                <Cell $w={121} $pad={1}>
                  <Dropdown label="Display" value="Display 1" $flat $h={30} $bg="transparent" $fg={c.label} $pl={5} $ar={6} />
                </Cell>
                <Cell $w={240} $pad={1}>
                  <Dropdown label="Aspect" value="16:9 Aspect" $flat $h={30} $bg="transparent" $fg={c.label} $ar={6} />
                </Cell>
                <Cell $pad={10} $gap={12}>
                  <label htmlFor="zoom">Scale</label>
                  <Slider id="zoom" type="range" min="0" max="100" defaultValue="13" $w={150} />
                  1.3x
                </Cell>
                <Cell as="button" $w={171} $justify="center">Maximize On Play</Cell>
                <Cell as="button" $w={116} $justify="center">Mute Audio</Cell>
                <Cell as="button" $w={60} $justify="center">Stats</Cell>
                <Cell as="button" $w={102} $gap={8}>
                  Gizmos<S w={22} h={18}><path d="M1 0v18" stroke={c.line} strokeWidth="2" /><path d="M8 6h11l-5.500 7z" fill={c.icon} /></S>
                </Cell>
              </Strip>
              <Viewport><GameCanvas><PlayButton>PLAY</PlayButton></GameCanvas></Viewport>
            </Panel>
          </TopRow>

          <Panel $flex="404 1 0">
            <TabBar>
              <Tab $on $w={121} $gap={7}><Folder />Project</Tab>
              <Tab $w={130} $pad={15}><ConsoleIcon />Console</Tab>
              <TabTools>
                <IconButton aria-label="Lock"><Lock /></IconButton>
                <IconButton aria-label="More"><Dots /></IconButton>
              </TabTools>
            </TabBar>
            <Strip $l={9} $h={30}>
              <AddButton aria-label="Create"><Plus /><Caret /></AddButton>
              <SearchBox $w={450}><Magnifier /><input aria-label="Search project" /></SearchBox>
              <Cell $w={4} $pad={1} />
              <Cell as="button" aria-label="Filter by type" $w={39} $justify="center"><ShapesIcon /></Cell>
              <Cell as="button" aria-label="Filter by label" $w={39} $justify="center"><TagIcon /></Cell>
              <Cell as="button" aria-label="Favorite" $w={39} $justify="center"><Star color="#6f6f6f" s={18} /></Cell>
              <Cell as="button" $w={60} $justify="center" $gap={2}><HiddenIcon />18</Cell>
            </Strip>
            <ProjectBody>
              <ProjectSide>
                <Tree>
                  <TreeRow $indent={6} $bold $gap={7}><Fold><FoldDown /></Fold><Star color="#d29d0c" />Favorites</TreeRow>
                  {["All Materials", "All Models", "All Prefabs"].map((n) => (
                    <TreeRow key={n} $indent={48}><BigMagnifier />{n}</TreeRow>
                  ))}
                  <Gap24 />
                  <TreeRow $indent={6} $bold><Fold><FoldDown /></Fold><FolderOpen />Assets</TreeRow>
                  {["Images", "Prefabs", "Scenes", "Script"].map((n) => (
                    <TreeRow key={n} $indent={48} $bg={n === "Script" && "#3e3e3e"}><Folder />{n}</TreeRow>
                  ))}
                  <TreeRow $indent={6} $bold $gap={7}><Fold><FoldRight /></Fold><Folder />Packages</TreeRow>
                </Tree>
              </ProjectSide>
              <ProjectMain>
                <Crumbs>
                  <a href="#assets">Assets</a>
                  <S w={8} h={14} stroke="#777" strokeWidth="2"><path d="M1 1l6 6-6 6" /></S>
                  <b>Script</b>
                </Crumbs>
                <Files>{files.map((f) => <File key={f}><ScriptFile />{f}</File>)}</Files>
                <Footer><Slider type="range" aria-label="Icon size" min="0" max="100" defaultValue="59" $w={82} /></Footer>
              </ProjectMain>
            </ProjectBody>
          </Panel>
        </MainColumn>

        <Panel $flex="0 0 450px">
          <TabBar>
            <Tab $on $w={143} $pad={13}><InfoIcon />Inspector</Tab>
            <TabTools>
              <IconButton aria-label="Lock"><Lock /></IconButton>
              <IconButton aria-label="More"><Dots /></IconButton>
            </TabTools>
          </TabBar>
          <InspectorBody>
            <InspectorContent>
              <CaptionRow><Caption $w={89}>Width</Caption><Caption $w={89}>Height</Caption></CaptionRow>
              <Fields $top>
                <Row>
                  <Caption $w={132} />
                  <Well $off $w={86} $r={4}><input aria-label="Width" defaultValue="487" disabled /></Well>
                  <Well $off $w={86}><input aria-label="Height" defaultValue="274" disabled /></Well>
                  <ModeGroup><ModeButton $w={35} aria-label="Blueprint mode"><DashedRect /></ModeButton><ModeButton $w={40}>R</ModeButton></ModeGroup>
                </Row>
                <Row><AnchorButton><FoldRight />Anchors</AnchorButton></Row>
                <VectorRow label="Pivot" values={["0.5", "0.5"]} start={133} axis={17} width={68} gap={5} />
                <VectorRow label="Rotation" values={["0", "0", "0"]} start={138} axis={17} width={65} gap={7} apart />
                <VectorRow label="Scale" values={["0.03645", "0.03645", "0.03645"]} start={138} axis={17} width={65} gap={7} />
              </Fields>

              <Inspected name="Canvas" icon={<CanvasIcon />}>
                <DropRow label="Render Mode" value="Screen Space - Camera" />
                <CheckRow indent label="Pixel Perfect" />
                <ObjectRow indent label="Render Camera" value="Main Camera (Camera)" icon={<CameraIcon />} />
                <TextRow indent label="Plane Distance" value="100" />
                <DropRow indent apart label="Sorting Layer" value="Default" />
                <TextRow indent label="Order in Layer" value="0" />
                <DropRow label="Additional Shader Channels" value="Nothing" />
              </Inspected>

              <Inspected name="Canvas Scaler" icon={<ScalerIcon />}>
                <DropRow label="UI Scale Mode" value="Constant Pixel Size" />
                <TextRow apart label="Scale Factor" value="1" />
                <TextRow label="Reference Pixels Per Unit" value="100" />
              </Inspected>

              <Inspected name="Graphic Raycaster" icon={<RayIcon />}>
                <ObjectRow off label="Script" value="GraphicRaycaster" icon={<RayIcon w={15} h={14} o={0.5} />} />
                <CheckRow label="Ignore Reversed Graphics" checked />
                <DropRow label="Blocking Objects" value="None" />
                <DropRow label="Blocking Mask" value="Everything" />
              </Inspected>

              <AddComponent><button>Add Component</button></AddComponent>
            </InspectorContent>
            <ScrollTrack>
              <S w={11} h={6}><path d="M0 6h11L5.500 0z" fill={c.icon} /></S>
              <ScrollThumb />
              <Caret />
            </ScrollTrack>
          </InspectorBody>
        </Panel>
      </Workspace>

      <StatusBar>
        <StatusButton aria-label="Debugger"><BugOff /></StatusButton>
        <StatusButton aria-label="Cache server"><CacheOff /></StatusButton>
        <StatusButton aria-label="Auto lighting"><LightOff /></StatusButton>
        <StatusButton aria-label="Activity"><Okay /></StatusButton>
      </StatusBar>

      <TaskBar>
        {tasks.map(([n, I, open]) => <Task key={n} aria-label={n}><TaskFace $open={open}><I /></TaskFace></Task>)}
        <Task aria-label="Unity"><TaskFace $open $active><UnityTile w={32} h={30} /></TaskFace></Task>
        <Tray>
          <Battery>97%</Battery><BatteryNub />
          <TrayItem $w={24}><Leaf /></TrayItem>
          <TrayItem $w={48}><Chevron /></TrayItem>
          <TrayItem $w={24}><MeetIcon /></TrayItem>
          <TrayItem $w={48}><PlugIcon /></TrayItem>
          <TrayItem $w={26}><WifiIcon /></TrayItem>
          <TrayItem $w={47}><SpeakerIcon /></TrayItem>
          <TrayItem $w={40}>ENG</TrayItem>
          <Clock><span>1:55 PM</span><span>10/24/2021</span></Clock>
          <Notice aria-label="Notifications"><NoteIcon /><Badge>2</Badge></Notice>
        </Tray>
      </TaskBar>
    </Screen>
  );
}
